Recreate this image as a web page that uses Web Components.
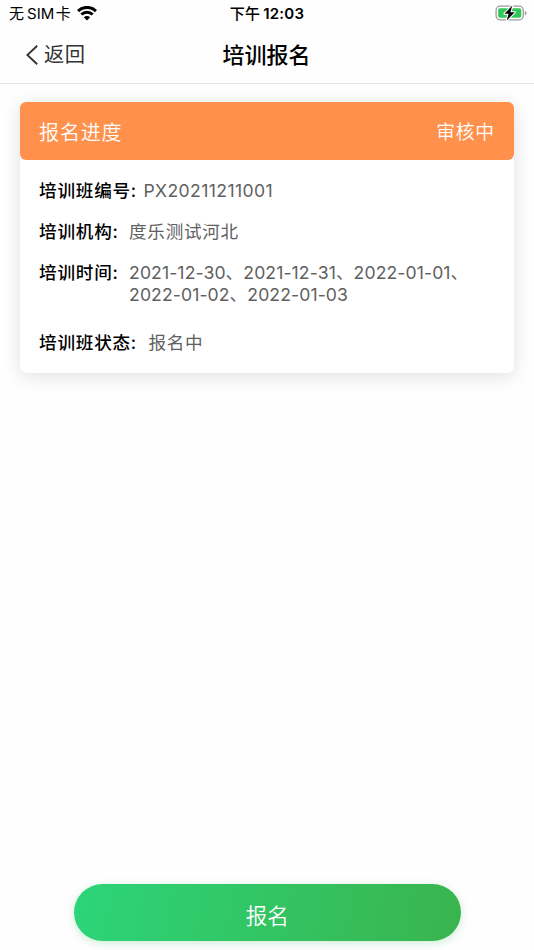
<!DOCTYPE html>
<html lang="zh-CN">
<head>
<meta charset="utf-8">
<title>培训报名</title>
<style>
html,body{margin:0;height:100%;background:#fff}
body{font-family:Inter,"Noto Sans CJK SC",sans-serif;color:#000;overflow:hidden}
</style>
</head>
<body>
<training-page></training-page>
<script>
const define=(name,html)=>customElements.define(name,class extends HTMLElement{
  constructor(){
    super();
    const t=document.createElement('template');
    t.innerHTML=html;
    this.attachShadow({mode:'open'}).append(t.content.cloneNode(true));
  }
});

define('status-bar',`<style>
:host{display:grid;grid-template-columns:1fr auto 1fr;align-items:center;height:28px;padding:0 7px 0 9px;font-size:15px;line-height:28px;box-sizing:border-box}
.l{display:flex;align-items:center;white-space:pre}
.l svg{margin:-2px 0 0 6.5px}
.c{font-weight:600;letter-spacing:.2px;white-space:pre;margin-right:2px}
.c b{font-weight:500}
.r{justify-self:end;display:flex;margin-top:-2px}
svg{display:block}
</style>
<div class="l"><span>无</span><span style="margin-left:3px">SIM</span><span style="margin-left:1.5px">卡</span>
<svg width="20" height="15" viewBox="0 0 20 15"><path d="M1.1 5.1A12.6 12.6 0 0 1 18.9 5.1" fill="none" stroke="#000" stroke-width="3.1"/><path d="M4.3 8.6A8.1 8.1 0 0 1 15.7 8.6" fill="none" stroke="#000" stroke-width="2.8"/><path d="M10 14.4 6.8 11.3A4.5 4.5 0 0 1 13.2 11.3Z"/></svg></div>
<div class="c"><b>下午</b><span style="margin-left:3px">12:03</span></div>
<div class="r"><svg width="32" height="18" viewBox="0 0 32 18"><rect x="1.1" y="2.2" width="27.2" height="13.6" rx="4" fill="#fff" stroke="#9b9b9b" stroke-width="1.3"/><rect x="3.1" y="4.2" width="23.2" height="9.6" rx="2" fill="#33c759"/><path d="M29.9 6.8Q31.6 7.5 31.6 9.1T29.9 11.5Z" fill="#9b9b9b"/><path d="M17.3 1.6 9.5 9.8H13.6L11.7 16.6 19.6 8.3H15.4Z" fill="#000" stroke="#fff" stroke-width="2.2" paint-order="stroke" stroke-linejoin="round"/></svg></div>`);

define('nav-bar',`<style>
:host{display:grid;grid-template-columns:1fr auto 1fr;align-items:center;height:56px;padding:0 27px 1px 26px;border-bottom:1px solid #e6e6e6;box-sizing:border-box}
.b{display:flex;align-items:center;color:#333;font-size:20.3px;letter-spacing:.5px;line-height:30px}
svg{margin-right:6px}
h1{margin:0;font-size:22px;font-weight:500;line-height:30px}
</style><div class="b"><svg width="12" height="20" viewBox="0 0 12 20"><path d="M11.2.8 1.3 10 11.2 19.2" fill="none" stroke="#333" stroke-width="1.9"/></svg><slot name="back"></slot></div><h1><slot></slot></h1>`);

define('info-row',`<style>
:host{display:flex;align-items:flex-start;font-size:17.6px;line-height:21.6px;letter-spacing:.75px}
.k{font-weight:500;color:#000;white-space:nowrap;flex:none}
.v{color:#606060;font-weight:400;margin-left:var(--gap,6px);letter-spacing:var(--track,.7px)}
</style><div class="k"><slot name="label"></slot></div><div class="v"><slot></slot></div>`);

define('progress-card',`<style>
:host{display:block;background:#fff;border-radius:7px;box-shadow:0 3px 18px rgba(0,0,0,.12);height:271px}
header{display:flex;justify-content:space-between;align-items:center;height:58px;padding:0 19.5px;border-radius:6px;background:#ff914d;color:#fff;font-size:20px;letter-spacing:.8px;font-weight:350;box-sizing:border-box}
.s{font-size:18.8px;margin-top:-1px}
.body{padding:20px 19.5px 0;display:flex;flex-direction:column;gap:19.6px}
</style><header><slot name="title"></slot><span class="s"><slot name="state"></slot></span></header><div class="body"><slot></slot></div>`);

define('submit-button',`<style>
:host{display:block}
button{display:block;width:100%;height:57px;border:0;border-radius:29px;padding:6px 0 0;background:linear-gradient(100deg,#2cd579,#39b44e);box-shadow:0 2px 9px rgba(50,180,90,.25);color:#fff;font:350 21.5px/30px Inter,"Noto Sans CJK SC",sans-serif}
</style><button><slot></slot></button>`);

define('training-page',`<style>
:host{display:flex;flex-direction:column;height:950px;width:534px;background:#fefefe}
main{flex:1;padding:18px 19.6px 0}
footer{padding:0 73.5px 9px 74px}
</style>
<status-bar></status-bar>
<nav-bar><span slot="back">返回</span>培训报名</nav-bar>
<main><progress-card><span slot="title">报名进度</span><span slot="state">审核中</span>
<info-row style="--gap:6.5px;--track:.4px"><span slot="label">培训班编号:</span>PX20211211001</info-row>
<info-row style="--gap:10.5px"><span slot="label">培训机构:</span>度乐测试河北</info-row>
<info-row style="--gap:10.5px;--track:.1px"><span slot="label">培训时间:</span>2021-12-30、2021-12-31、2022-01-01、<br>2022-01-02、2022-01-03</info-row>
<info-row style="--gap:11.5px;margin-top:7px"><span slot="label">培训班状态:</span>报名中</info-row>
</progress-card></main>
<footer><submit-button>报名</submit-button></footer>`);
</script>
</body>
</html>
